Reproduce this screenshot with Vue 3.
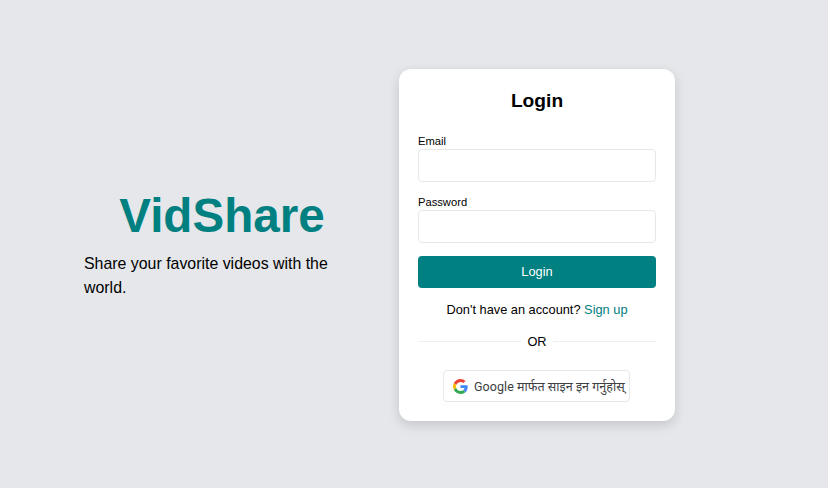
<script setup>
const brand = 'VidShare'
const tagline = 'Share your favorite videos with the world.'
</script>

<template>
  <main class="page">
    <section class="intro">
      <h1 class="brand">{{ brand }}</h1>
      <p class="tagline">{{ tagline }}</p>
    </section>
    <section class="card">
      <h2 class="title">Login</h2>
      <form class="form" @submit.prevent>
        <label class="field">
          <span class="label">Email</span>
          <input class="input" type="email" />
        </label>
        <label class="field">
          <span class="label">Password</span>
          <input class="input" type="password" />
        </label>
        <button class="submit" type="submit">Login</button>
      </form>
      <p class="signup">Don't have an account? <a class="link" href="#">Sign up</a></p>
      <div class="divider"><span class="rule"></span><span class="or">OR</span><span class="rule"></span></div>
      <button class="google" type="button">
        <svg class="g-icon" viewBox="0 0 48 48" width="15" height="15">
          <path fill="#EA4335" d="M24 9.5c3.54 0 6.71 1.22 9.21 3.6l6.85-6.85C35.9 2.38 30.47 0 24 0 14.62 0 6.51 5.38 2.56 13.22l7.98 6.19C12.43 13.72 17.74 9.5 24 9.5z"/>
          <path fill="#4285F4" d="M46.98 24.55c0-1.57-.15-3.09-.38-4.55H24v9.02h12.94c-.58 2.96-2.26 5.48-4.78 7.18l7.73 6c4.51-4.18 7.09-10.36 7.09-17.65z"/>
          <path fill="#FBBC05" d="M10.53 28.59c-.48-1.45-.76-2.99-.76-4.59s.27-3.14.76-4.59l-7.98-6.19C.92 16.46 0 20.12 0 24c0 3.88.92 7.54 2.56 10.78l7.97-6.19z"/>
          <path fill="#34A853" d="M24 48c6.48 0 11.93-2.13 15.89-5.81l-7.73-6c-2.15 1.45-4.92 2.3-8.16 2.3-6.26 0-11.57-4.22-13.47-9.91l-7.98 6.19C6.51 42.62 14.62 48 24 48z"/>
        </svg>
        <span class="g-text">Google मार्फत साइन इन गर्नुहोस्</span>
      </button>
    </section>
  </main>
</template>

<style>
html, body { margin: 0; background: #e5e7eb; }
</style>

<style scoped>
.page {
  box-sizing: border-box;
  width: 828px;
  height: 488px;
  padding: 1px 0 0 84px;
  display: flex;
  align-items: center;
  gap: 39px;
  background: #e5e7eb;
  font-family: "Liberation Sans", Arial, sans-serif;
  color: #000;
}
.intro { width: 276px; margin-top: 2px; }
.brand {
  margin: 0 0 12px;
  text-align: center;
  font-size: 47.6px;
  line-height: 48px;
  font-weight: 700;
  color: #008080;
}
.tagline { margin: 0; font-size: 15.9px; line-height: 24px; }
.card {
  box-sizing: border-box;
  width: 276px;
  height: 352px;
  padding: 19px;
  background: #fff;
  border-radius: 12px;
  box-shadow: 0 4px 12px rgba(0, 0, 0, 0.15);
}
.title {
  margin: 0 0 20px;
  text-align: center;
  font-size: 19.2px;
  line-height: 26px;
  font-weight: 700;
}
.form { display: flex; flex-direction: column; }
.field { display: block; margin-bottom: 13px; }
.label { display: block; font-size: 11.2px; line-height: 14px; height: 15px; }
.input {
  display: block;
  box-sizing: border-box;
  width: 100%;
  height: 33px;
  border: 1px solid #e5e7eb;
  border-radius: 4px;
  background: #fff;
  outline: none;
}
.submit {
  height: 32px;
  border: 0;
  border-radius: 4px;
  background: #008080;
  color: #fff;
  font: 12.8px "Liberation Sans", Arial, sans-serif;
}
.signup { margin: 14px 0 0; text-align: center; font-size: 12.8px; line-height: 16px; }
.link { color: #008080; text-decoration: none; }
.divider { display: flex; align-items: center; gap: 6px; margin-top: 16px; font-size: 12.8px; line-height: 16px; }
.rule { flex: 1; height: 1px; background: #eeeff1; }
.google {
  display: flex;
  align-items: center;
  gap: 6px;
  box-sizing: border-box;
  width: 187px;
  height: 32px;
  margin: 20px 0 0 25px;
  padding: 1px 0 0 9px;
  background: #fff;
  border: 1px solid #e5e7eb;
  border-radius: 4px;
  white-space: nowrap;
}
.g-icon { flex: none; }
.g-text {
  font-family: Roboto, "Noto Sans", sans-serif;
  font-size: 12.5px;
  letter-spacing: 0.06px;
  color: #3c4043;
}
</style>
